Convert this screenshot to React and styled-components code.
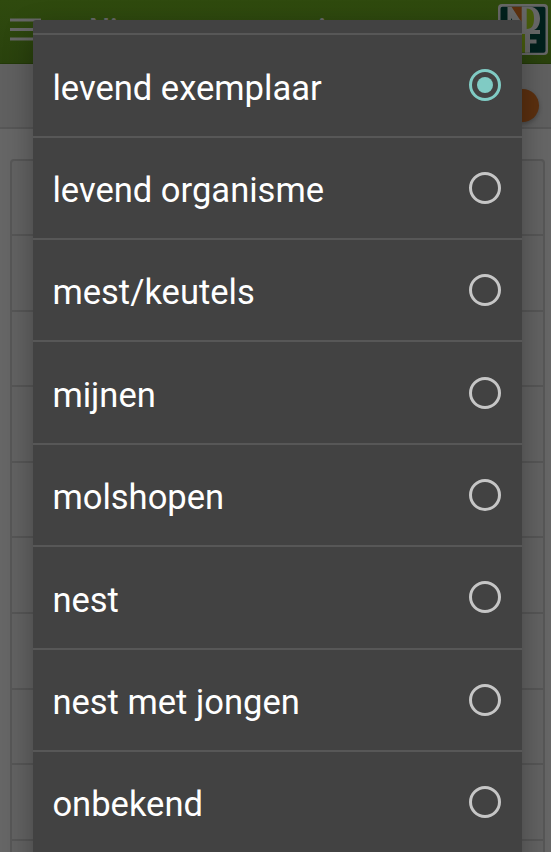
import styled, { createGlobalStyle } from "styled-components";
import { useState } from "react";

const GlobalStyle = createGlobalStyle`
  * {
    box-sizing: border-box;
  }
  body {
    margin: 0;
    background: #666;
    font-family: Roboto, "Noto Sans", sans-serif;
  }
`;

const Screen = styled.div`
  position: relative;
  width: 100%;
  height: 100vh;
  overflow: hidden;
`;

const Header = styled.header`
  display: flex;
  align-items: flex-start;
  height: 64px;
  background: linear-gradient(#2f4a0e, #2a420d);
  border-bottom: 1px solid #233a08;
  padding: 4px 3px 0 10px;

  > svg.menu {
    flex: 0 0 auto;
    margin-top: 14px;
  }
  > h1 {
    flex: 1;
    margin: 7px 0 0 -7px;
    color: #666;
    font-size: 29.7px;
    font-weight: 500;
    line-height: 36px;
    white-space: nowrap;
    text-indent: 55px;
  }
`;

const Toolbar = styled.div`
  display: flex;
  justify-content: flex-end;
  align-items: flex-start;
  height: 65px;
  padding: 25px 12px 0 0;
  background: #606060;
  border-bottom: 2px solid #575757;
`;

const Toggle = styled.div`
  width: 80px;
  height: 33px;
  border-radius: 17px;
  background: #5c300f;
  box-shadow: 0 2px 4px rgba(0, 0, 0, 0.25);
`;

const List = styled.div`
  margin: 29.5px 6px 0 10px;
  border: 2px solid #575757;
  border-radius: 4px;
  background: #636363;
`;

const ListRow = styled.div`
  height: 75.6px;
  border-bottom: 2px solid #575757;
`;

const Dialog = styled.div`
  position: absolute;
  top: 20px;
  left: 33.4px;
  right: 29.4px;
  bottom: -40px;
  overflow: hidden;
  border-radius: 3px;
  background: #424242;
`;

const Shadow = styled.div`
  position: absolute;
  top: 20px;
  left: 33px;
  right: 29px;
  bottom: -40px;
  border-radius: 3px;
  box-shadow: 0 12px 30px rgba(0, 0, 0, 0.32);
`;

const Options = styled.div`
  margin-top: 13.2px;
`;

const Option = styled.label`
  display: flex;
  justify-content: space-between;
  align-items: center;
  height: 102.4px;
  padding: 0 20.8px 0 19px;
  border-top: 2px solid #575757;
  color: #fff;
  font-size: 34.55px;
  line-height: 42px;
  cursor: pointer;

  > span:first-child {
    padding-top: 4.4px;
  }
  input {
    position: absolute;
    opacity: 0;
  }
`;

const Radio = styled.span`
  display: flex;
  justify-content: center;
  align-items: center;
  width: 32px;
  height: 32px;
  border: 3.2px solid ${(props) => (props.$checked ? "#80cbc4" : "#c6c6c6")};
  border-radius: 50%;

  &::after {
    content: "";
    width: 16px;
    height: 16px;
    border-radius: 50%;
    background: ${(props) => (props.$checked ? "#80cbc4" : "transparent")};
  }
`;

const options = [
  "levend exemplaar",
  "levend organisme",
  "mest/keutels",
  "mijnen",
  "molshopen",
  "nest",
  "nest met jongen",
  "onbekend",
];

function MenuIcon() {
  return (
    <svg className="menu" width="31" height="24" viewBox="0 0 31 24">
      <path d="M0 2h31M0 11.5h31M0 21h31" stroke="#666" strokeWidth="3.2" />
    </svg>
  );
}

function Logo() {
  return (
    <svg width="50" height="51" viewBox="0 0 50 51">
      <rect width="50" height="51" rx="4" fill="#666" />
      <rect x="2.5" y="2.7" width="45" height="46" rx="2" fill="#00201c" />
      <path d="M10 2.7h14v26L10 6z" fill="#5c300f" />
      <path d="M9.5 2.7h4L24 19v12L13 14v16H9.5z" fill="#666" />
      <path d="M22 28h8v20.7h-8z" fill="#475c0d" />
      <path d="M23.7 2.7H32C38.5 3 42 8 42 14.5S39 25 36 26h6v4H23.7z" fill="#666" />
      <path d="M28.7 4.5C34 4.5 36 8 36 14.5S34 25 28.7 25z" fill="#475c0d" />
      <path d="M27 29h5v6.5h6.5v4H32v9.2h-5z" fill="#666" />
    </svg>
  );
}

function App() {
  const [selected, setSelected] = useState("levend exemplaar");

  return (
    <Screen>
      <GlobalStyle />
      <Header>
        <MenuIcon />
        <h1>Nieuwe waarneming</h1>
        <Logo />
      </Header>
      <Toolbar>
        <Toggle />
      </Toolbar>
      <List>
        {Array.from({ length: 10 }, (_, i) => (
          <ListRow key={i} />
        ))}
      </List>
      <Shadow />
      <Dialog>
        <Options>
          {options.map((name) => (
            <Option key={name}>
              <span>{name}</span>
              <input
                type="radio"
                name="type"
                checked={selected === name}
                onChange={() => setSelected(name)}
              />
              <Radio $checked={selected === name} />
            </Option>
          ))}
        </Options>
      </Dialog>
    </Screen>
  );
}

export default App;
